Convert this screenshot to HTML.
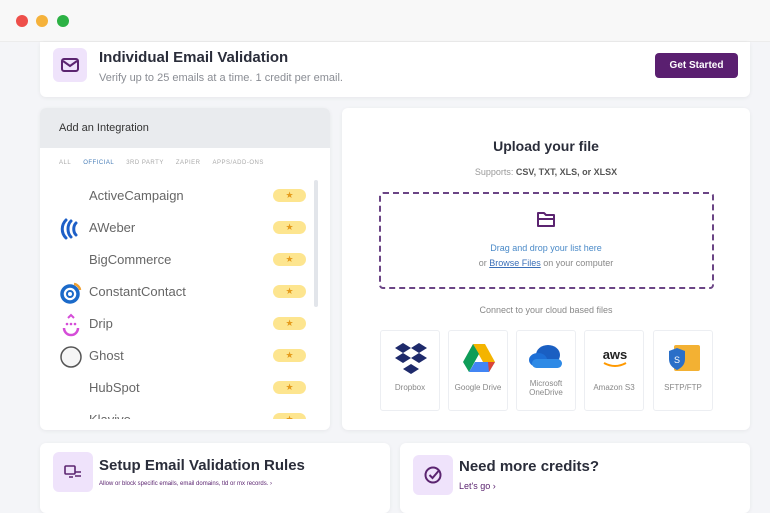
<!DOCTYPE html>
<html><head><style>
*{margin:0;padding:0;box-sizing:border-box}
body{width:770px;height:500px;overflow:hidden;background:#f4f5f8;font-family:"Liberation Sans",sans-serif;position:relative}
.a{position:absolute}
.card{position:absolute;background:#fff;border-radius:6px;box-shadow:0 1px 4px rgba(0,0,0,.06)}
.dot{position:absolute;top:15px;width:12px;height:12px;border-radius:50%}
.row{position:absolute;left:0;width:270px;height:24px}
.row .n{position:absolute;left:49px;top:4px;font-size:13px;color:#666}
.badge{position:absolute;left:233px;top:5px;width:33px;height:13px;border-radius:7px;background:#fde58f;color:#e59b1c;font-size:9px;text-align:center;line-height:13px}
.tile{position:absolute;top:330px;width:60px;height:81px;background:#fff;border:1px solid #eceef2;border-radius:3px;text-align:center;font-size:8px;color:#888}
.tile svg{position:absolute;left:13px;top:10px}
.tile span{position:absolute;left:0;right:0;top:52px}
</style></head><body>
<div class="a" style="left:0;top:0;width:770px;height:42px;background:#f8f8f8;border-bottom:1px solid #ececec"></div>
<div class="dot" style="left:16px;background:#ee4f4a"></div>
<div class="dot" style="left:36px;background:#f5b23b"></div>
<div class="dot" style="left:57px;background:#2cb144"></div>

<div class="card" style="left:40px;top:42px;width:710px;height:55px;border-radius:0 0 6px 6px">
 <div class="a" style="left:13px;top:6px;width:34px;height:34px;background:#efe3fb;border-radius:6px"></div>
 <svg class="a" style="left:20px;top:14px" width="20" height="18" viewBox="0 0 20 18"><rect x="2" y="3" width="16" height="12" rx="2" fill="none" stroke="#5b2470" stroke-width="2"/><path d="M3 5l7 5 7-5" fill="none" stroke="#5b2470" stroke-width="2"/></svg>
 <div class="a" style="left:59px;top:7px;font-size:15px;font-weight:bold;color:#2a2d3a">Individual Email Validation</div>
 <div class="a" style="left:59px;top:30px;font-size:11px;color:#8a8d94">Verify up to 25 emails at a time. 1 credit per email.</div>
 <div class="a" style="left:615px;top:11px;width:83px;height:25px;background:#5a1f70;border-radius:4px;color:#fff;font-size:10px;font-weight:bold;text-align:center;line-height:25px">Get Started</div>
</div>

<div class="card" style="left:40px;top:108px;width:290px;height:322px;overflow:hidden">
 <div class="a" style="left:0;top:0;width:290px;height:40px;background:#e9ebee"></div>
 <div class="a" style="left:19px;top:14px;font-size:11px;color:#333">Add an Integration</div>
 <div class="a" style="left:19px;top:52px;font-size:6px;letter-spacing:.5px;color:#aaa;word-spacing:0"><span>ALL</span><span style="margin-left:12px;color:#4a7fb8">OFFICIAL</span><span style="margin-left:12px">3RD PARTY</span><span style="margin-left:12px">ZAPIER</span><span style="margin-left:12px">APPS/ADD-ONS</span></div>
 <div class="a" style="left:274px;top:72px;width:4px;height:127px;background:#e2e5ea;border-radius:2px"></div>
 <div class="a" style="left:0;top:0;width:272px;height:311px;overflow:hidden">
 <div class="row" style="top:76px"><div class="n">ActiveCampaign</div><div class="badge">★</div></div>
 <div class="row" style="top:108px"><svg class="a" style="left:19px;top:1px" width="24" height="24" viewBox="0 0 24 24"><path d="M7 3C2 8 2 16 7 21M12 4C8 8 8 16 12 20M17 6C14 9 14 15 17 18" fill="none" stroke="#1d5fc7" stroke-width="3" stroke-linecap="round"/></svg><div class="n">AWeber</div><div class="badge">★</div></div>
 <div class="row" style="top:140px"><div class="n">BigCommerce</div><div class="badge">★</div></div>
 <div class="row" style="top:172px"><svg class="a" style="left:19px;top:1px" width="24" height="24" viewBox="0 0 24 24"><circle cx="11" cy="13" r="8" fill="none" stroke="#1b6ac9" stroke-width="3.5"/><circle cx="11" cy="13" r="3" fill="none" stroke="#1b6ac9" stroke-width="2"/><path d="M15 3a7 7 0 0 1 6 6" fill="none" stroke="#f0a030" stroke-width="2.5"/></svg><div class="n">ConstantContact</div><div class="badge">★</div></div>
 <div class="row" style="top:204px"><svg class="a" style="left:19px;top:0" width="24" height="26" viewBox="0 0 24 26"><path d="M9 6l3-3 3 3" fill="none" stroke="#d54dd8" stroke-width="2"/><circle cx="8" cy="12" r="1.3" fill="#d54dd8"/><circle cx="12" cy="12" r="1.3" fill="#d54dd8"/><circle cx="16" cy="12" r="1.3" fill="#d54dd8"/><path d="M5 16a7 7 0 0 0 14 0" fill="none" stroke="#d54dd8" stroke-width="2.5"/></svg><div class="n">Drip</div><div class="badge">★</div></div>
 <div class="row" style="top:236px"><svg class="a" style="left:19px;top:1px" width="24" height="24" viewBox="0 0 24 24"><circle cx="12" cy="12" r="10" fill="#f6f6f6" stroke="#555" stroke-width="1.5"/></svg><div class="n">Ghost</div><div class="badge">★</div></div>
 <div class="row" style="top:268px"><div class="n">HubSpot</div><div class="badge">★</div></div>
 <div class="row" style="top:300px"><div class="n">Klaviyo</div><div class="badge">★</div></div>
 </div>
</div>

<div class="card" style="left:342px;top:108px;width:408px;height:322px">
 <div class="a" style="left:0;width:408px;top:30px;text-align:center;font-size:14px;font-weight:bold;color:#2a2d3a">Upload your file</div>
 <div class="a" style="left:0;width:408px;top:59px;text-align:center;font-size:9px;color:#999">Supports: <b style="color:#555">CSV, TXT, XLS, or XLSX</b></div>
 <div class="a" style="left:37px;top:84px;width:335px;height:97px;border:2px dashed #6b4585;border-radius:4px"></div>
 <svg class="a" style="left:193px;top:102px" width="22" height="20" viewBox="0 0 22 20"><path d="M3 3h6l2 2h8v11H3z" fill="none" stroke="#5b2470" stroke-width="2" stroke-linejoin="round"/><path d="M3 9h16" stroke="#5b2470" stroke-width="2"/></svg>
 <div class="a" style="left:0;width:408px;top:135px;text-align:center;font-size:9px;color:#4a8ac8">Drag and drop your list here</div>
 <div class="a" style="left:0;width:408px;top:150px;text-align:center;font-size:9px;color:#888">or <u style="color:#3a6fb8">Browse Files</u> on your computer</div>
 <div class="a" style="left:0;width:408px;top:197px;text-align:center;font-size:9px;color:#888">Connect to your cloud based files</div>
</div>
<div class="tile" style="left:380px"><svg width="34" height="34" viewBox="0 0 34 34"><g fill="#1e2a6b"><path d="M9 2l8 5-8 5-8-5z"/><path d="M25 2l8 5-8 5-8-5z"/><path d="M9 12l8 5-8 5-8-5z"/><path d="M25 12l8 5-8 5-8-5z"/><path d="M17 23l8 5-8 5-8-5z"/></g></svg><span>Dropbox</span></div>
<div class="tile" style="left:448px"><svg width="34" height="34" viewBox="0 0 34 34"><path d="M11 3h12l10 18H21z" fill="#f4b400"/><path d="M11 3L1 21l6 10 10-18z" fill="#0f9d58"/><path d="M7 31h20l6-10H13z" fill="#4285f4"/><path d="M27 31l6-10h-7z" fill="#db4437"/></svg><span>Google Drive</span></div>
<div class="tile" style="left:516px"><svg width="36" height="34" viewBox="0 0 36 34" style="left:11px"><ellipse cx="20" cy="14" rx="12" ry="10" fill="#1a5fc2"/><ellipse cx="10" cy="19" rx="9" ry="7" fill="#1d6fd6"/><rect x="4" y="18" width="30" height="9" rx="4.5" fill="#2e8ae6"/></svg><span style="top:48px">Microsoft<br>OneDrive</span></div>
<div class="tile" style="left:584px"><svg width="34" height="34" viewBox="0 0 34 34"><text x="17" y="18" text-anchor="middle" font-family="Liberation Sans" font-weight="bold" font-size="13" fill="#222">aws</text><path d="M6 22q11 6 22 0" fill="none" stroke="#f90" stroke-width="2"/></svg><span>Amazon S3</span></div>
<div class="tile" style="left:653px"><svg width="36" height="34" viewBox="0 0 36 34"><rect x="7" y="4" width="26" height="26" rx="2" fill="#f3b133"/><path d="M2 10l8-3 8 3v8c0 6-4 9-8 11-4-2-8-5-8-11z" fill="#2a6fc8"/><text x="10" y="22" text-anchor="middle" font-size="9" fill="#fff" font-family="Liberation Sans">S</text></svg><span>SFTP/FTP</span></div>

<div class="card" style="left:40px;top:443px;width:350px;height:70px">
 <div class="a" style="left:13px;top:9px;width:40px;height:40px;background:#efe3fb;border-radius:6px"></div>
 <svg class="a" style="left:23px;top:20px" width="20" height="18" viewBox="0 0 20 18"><rect x="2" y="3" width="10" height="8" rx="1" fill="none" stroke="#5b2470" stroke-width="1.6"/><path d="M12 9h6M12 13h6M6 14h4" stroke="#5b2470" stroke-width="1.6"/></svg>
 <div class="a" style="left:59px;top:14px;font-size:15px;font-weight:bold;color:#2a2d3a">Setup Email Validation Rules</div>
 <div class="a" style="left:59px;top:38px;font-size:6px;color:#5b2470">Allow or block specific emails, email domains, tld or mx records. ›</div>
</div>
<div class="card" style="left:400px;top:443px;width:350px;height:70px">
 <div class="a" style="left:13px;top:12px;width:40px;height:40px;background:#efe3fb;border-radius:6px"></div>
 <svg class="a" style="left:23px;top:22px" width="20" height="20" viewBox="0 0 20 20"><circle cx="10" cy="10" r="7.5" fill="none" stroke="#5b2470" stroke-width="2"/><path d="M6.5 10l3 3 6-7" fill="none" stroke="#5b2470" stroke-width="2"/></svg>
 <div class="a" style="left:59px;top:15px;font-size:15px;font-weight:bold;color:#2a2d3a">Need more credits?</div>
 <div class="a" style="left:59px;top:38px;font-size:9px;color:#5b2470">Let's go ›</div>
</div>
</body></html>
